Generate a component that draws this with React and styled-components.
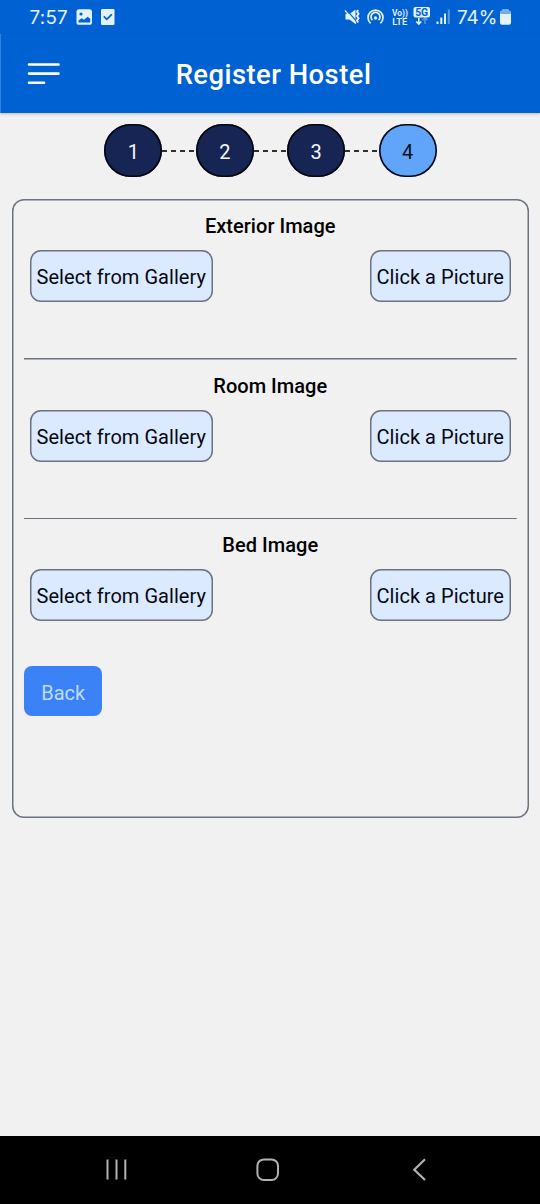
import React from "react";
import styled, { createGlobalStyle } from "styled-components";

const GlobalStyle = createGlobalStyle`
  * { box-sizing: border-box; }
  body { margin: 0; background: #f1f1f1; font-family: Roboto, "Liberation Sans", sans-serif; color: #000; }
  button { font-family: inherit; margin: 0; }
`;

const Screen = styled.div`
  width: 540px;
  height: 1204px;
  display: flex;
  flex-direction: column;
  background: #f1f1f1;
`;

const StatusBar = styled.div`
  height: 34px;
  flex: none;
  display: flex;
  align-items: center;
  padding: 0 28px 0 29.5px;
  background: #0062d2;
  color: #e4f1ff;
`;

const StatusText = styled.span`
  font-family: Inter, Roboto, sans-serif;
  font-size: ${(p) => p.$size}px;
  letter-spacing: ${(p) => p.$spacing}px;
  width: ${(p) => p.$width}px;
  padding: 1px 0 0 ${(p) => p.$indent || 0}px;
  line-height: 33px;
  white-space: nowrap;
`;

const StatusIcons = styled.svg`
  display: block;
  flex: none;
  margin-left: ${(p) => p.$left || 0};
`;

const Header = styled.header`
  height: 79px;
  flex: none;
  display: grid;
  grid-template-columns: 60px 1fr 60px;
  align-items: center;
  background: #0062d2;
  border-left: 1px solid #2f83df;
  box-shadow: 0 1px 3px rgba(0, 0, 0, 0.22);
  color: #fff;
`;

const MenuButton = styled.button`
  padding: 0 0 0 25.5px;
  border: 0;
  background: none;
  display: flex;
`;

const Title = styled.h1`
  margin: 3px 0 0 6px;
  text-align: center;
  font-size: 27.4px;
  font-weight: 500;
  line-height: 36px;
  letter-spacing: 0.47px;
`;

const Steps = styled.div`
  display: flex;
  align-items: center;
  justify-content: center;
  padding: 11px 0 0 1px;
`;

const Step = styled.div`
  width: 58px;
  height: 53px;
  box-shadow: inset 0 0 0 1.6px #05070f;
  border-radius: 27px;
  display: flex;
  align-items: center;
  justify-content: center;
  padding-top: 2px;
  font-size: 20px;
  background: ${(p) => (p.$current ? "#60a5fa" : "#172554")};
  color: ${(p) => (p.$current ? "#071020" : "#f5f8ff")};
`;

const Connector = styled.div`
  width: 33.4px;
  height: 2px;
  background: repeating-linear-gradient(90deg, #303030 0 5px, transparent 5px 9px);
`;

const Card = styled.main`
  margin: 22px 11.5px 0 11.5px;
  height: 619px;
  padding: 1px 12px 0 12.5px;
  box-shadow: inset 0 0 0 1.5px #6b7280;
  border-radius: 12px;
`;

const Section = styled.section`
  height: ${(p) => (p.$last ? 147.4 : 159.5)}px;
  padding: 13px 5.5px 0;
  background: ${(p) => (p.$last ? "none" : "linear-gradient(#6b7280, #6b7280) bottom / 100% 1.5px no-repeat")};
`;

const SectionTitle = styled.h2`
  margin: 0;
  text-align: center;
  font-size: 20px;
  font-weight: 500;
  line-height: 27px;
  letter-spacing: 0.03px;
`;

const Actions = styled.div`
  display: flex;
  justify-content: space-between;
  margin-top: 10px;
`;

const ActionButton = styled.button`
  width: ${(p) => p.$width}px;
  height: 52px;
  padding: 2px 0 0;
  border: 0;
  box-shadow: inset 0 0 0 1.5px #6b7280;
  border-radius: 11px;
  background: #dbeafe;
  color: #030812;
  font-size: 20px;
  letter-spacing: 0.04px;
  white-space: nowrap;
`;

const BackButton = styled.button`
  display: block;
  width: 77.5px;
  height: 49.5px;
  padding: 3px 0 0 1px;
  border: 0;
  border-radius: 8px;
  background: #3b82f6;
  color: #bfdbfe;
  font-size: 20px;
`;

const NavBar = styled.nav`
  height: 68px;
  margin-top: auto;
  background: #000;
  display: grid;
  grid-template-columns: 117px 151px 151px;
  align-items: center;
`;

const NavIcon = styled.svg`
  justify-self: end;
  margin-right: -14px;
  display: block;
`;

const sections = ["Exterior Image", "Room Image", "Bed Image"];

function LeftStatus() {
  return (
    <StatusIcons width="42" height="20" viewBox="75 7 42 20">
      <rect x="76.5" y="9.3" width="15.5" height="15.5" rx="2.6" fill="#e4f1ff" />
      <circle cx="81" cy="14" r="1.6" fill="#0062d2" />
      <path d="M78.5 22.5v-2l3.2-2.2 2.2 1.4 3.8-3 2.5 2v3.8z" fill="#0062d2" />
      <rect x="101" y="9" width="13.5" height="16" rx="1.2" fill="#e4f1ff" />
      <path d="m103.8 16.3 3 3 5-5" fill="none" stroke="#0062d2" strokeWidth="1.8" />
    </StatusIcons>
  );
}

function RightStatus() {
  return (
    <StatusIcons $left="auto" width="109" height="24" viewBox="344 5 109 24">
      <g fill="none" stroke="#e4f1ff" strokeWidth="1.4">
        <path d="M345.5 14h4l6-4.5v14.5l-6-4.5h-4z" fill="#e4f1ff" stroke="none" />
        <path d="m346 9.4 11.5 13" stroke="#0062d2" strokeWidth="1.2" />
        <path d="m345 10.5 11 13" strokeWidth="1.3" />
        <path d="m358.2 10-1.2 1.8 1.6 2-1.6 2.2 1.6 2.2-1.6 2.2 1.2 2" strokeWidth="1.9" />
        <path d="M370.6 23.3a7.5 7.5 0 1 1 9.8 0M372.4 20.2a4.5 4.5 0 1 1 6.2 0" strokeWidth="1.7" />
        <circle cx="375.5" cy="18" r="1.7" fill="#e4f1ff" stroke="none" />
        <path d="M418.8 17.8v6.2m-2.5-2.5 2.5 2.5 2.5-2.5" strokeWidth="1.6" />
        <path d="M425 24v-6m-2.5 2.2 2.5-2.5 2.5 2.5" opacity=".4" />
      </g>
      <g fill="#e4f1ff" fontFamily="Roboto, sans-serif" fontWeight="600">
        <text x="392" y="15.8" fontSize="8.2" textLength="16" lengthAdjust="spacingAndGlyphs">Vo))</text>
        <text x="392.3" y="25.2" fontSize="8.2" textLength="15" lengthAdjust="spacingAndGlyphs">LTE</text>
      </g>
      <rect x="413.5" y="7" width="16.5" height="10.5" rx="2" fill="#e4f1ff" />
      <text x="415.2" y="15.8" fontSize="10" fontWeight="700" fontFamily="Roboto, sans-serif" fill="#0062d2" textLength="13" lengthAdjust="spacingAndGlyphs">5G</text>
      <g fill="#e4f1ff">
        <rect x="436.5" y="21.5" width="2" height="2.5" />
        <rect x="440.3" y="17.5" width="2" height="6.5" />
        <rect x="444" y="13.5" width="2" height="10.5" />
        <rect x="447.8" y="9.5" width="2" height="14.5" opacity=".4" />
      </g>
    </StatusIcons>
  );
}

export default function App() {
  return (
    <Screen>
      <GlobalStyle />
      <StatusBar>
        <StatusText $size={18.8} $spacing={0.25} $width={45.5}>7:57</StatusText>
        <LeftStatus />
        <RightStatus />
        <StatusText $size={19} $spacing={-0.1} $width={46} $indent={4}>74%</StatusText>
        <StatusIcons width="13" height="20" viewBox="499 7 13 20">
          <rect x="502" y="9" width="7" height="4" rx="1" fill="#e4f1ff" opacity=".5" />
          <rect x="500" y="10.8" width="11" height="14" rx="2" fill="#e4f1ff" />
          <rect x="500" y="10.8" width="11" height="3.2" rx="1.5" fill="#72aaea" />
        </StatusIcons>
      </StatusBar>
      <Header>
        <MenuButton aria-label="Menu">
          <svg width="34" height="24" viewBox="0 0 34 24">
            <path d="M2 2.5h29.5M2 11.6h29.5M2 20.7h15" stroke="#fff" strokeWidth="2.6" strokeLinecap="round" />
          </svg>
        </MenuButton>
        <Title>Register Hostel</Title>
      </Header>
      <Steps>
        {[1, 2, 3, 4].map((n) => (
          <React.Fragment key={n}>
            {n > 1 && <Connector />}
            <Step $current={n === 4}>{n}</Step>
          </React.Fragment>
        ))}
      </Steps>
      <Card>
        {sections.map((name, i) => (
          <Section key={name} $last={i === sections.length - 1}>
            <SectionTitle>{name}</SectionTitle>
            <Actions>
              <ActionButton $width={183.5}>Select from Gallery</ActionButton>
              <ActionButton $width={141.5}>Click a Picture</ActionButton>
            </Actions>
          </Section>
        ))}
        <BackButton>Back</BackButton>
      </Card>
      <NavBar>
        <NavIcon width="28" height="28" viewBox="0 0 28 28">
          <path d="M4.5 3.5v20M13.5 3.5v20M22.3 3.5v20" stroke="#b2b2b2" strokeWidth="2" />
        </NavIcon>
        <NavIcon width="28" height="28" viewBox="0 0 28 28">
          <rect x="3.4" y="3.4" width="20.6" height="20.6" rx="6.5" fill="none" stroke="#b2b2b2" strokeWidth="2" />
        </NavIcon>
        <NavIcon width="28" height="28" viewBox="0 0 28 28">
          <path d="m20 3.3-10.7 10.4L20 24" fill="none" stroke="#b2b2b2" strokeWidth="2.2" />
        </NavIcon>
      </NavBar>
    </Screen>
  );
}
